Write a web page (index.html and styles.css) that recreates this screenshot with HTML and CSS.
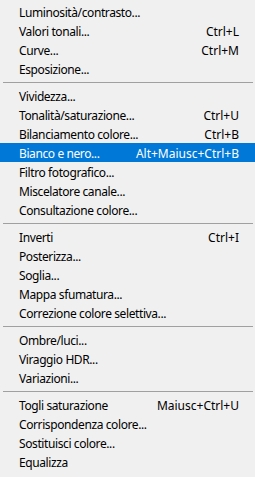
FILE: index.html
```html
<!DOCTYPE html>
<html>
<head>
<meta charset="utf-8">
<link rel="stylesheet" href="styles.css">
</head>
<body>
<div class="menu">
  <div class="item"><span>Luminosità/contrasto...</span></div>
  <div class="item"><span>Valori tonali...</span><span class="key">Ctrl+L</span></div>
  <div class="item"><span>Curve...</span><span class="key">Ctrl+M</span></div>
  <div class="item"><span>Esposizione...</span></div>
  <div class="sep"></div>
  <div class="item"><span>Vividezza...</span></div>
  <div class="item"><span>Tonalità/saturazione...</span><span class="key">Ctrl+U</span></div>
  <div class="item"><span>Bilanciamento colore...</span><span class="key">Ctrl+B</span></div>
  <div class="item active"><span>Bianco e nero...</span><span class="key">Alt+Maiusc+Ctrl+B</span></div>
  <div class="item"><span>Filtro fotografico...</span></div>
  <div class="item"><span>Miscelatore canale...</span></div>
  <div class="item"><span>Consultazione colore...</span></div>
  <div class="sep"></div>
  <div class="item"><span>Inverti</span><span class="key">Ctrl+I</span></div>
  <div class="item"><span>Posterizza...</span></div>
  <div class="item"><span>Soglia...</span></div>
  <div class="item"><span>Mappa sfumatura...</span></div>
  <div class="item"><span>Correzione colore selettiva...</span></div>
  <div class="sep"></div>
  <div class="item"><span>Ombre/luci...</span></div>
  <div class="item"><span>Viraggio HDR...</span></div>
  <div class="item"><span>Variazioni...</span></div>
  <div class="sep"></div>
  <div class="item"><span>Togli saturazione</span><span class="key">Maiusc+Ctrl+U</span></div>
  <div class="item"><span>Corrispondenza colore...</span></div>
  <div class="item"><span>Sostituisci colore...</span></div>
  <div class="item"><span>Equalizza</span></div>
</div>
</body>
</html>
```

FILE: styles.css
```css
html, body {
  margin: 0;
  padding: 0;
  background: #f0f0f0;
}
.menu {
  width: 255px;
  padding-top: 2px;
  font-family: "Noto Sans", "DejaVu Sans", sans-serif;
  font-size: 12px;
  letter-spacing: -0.4px;
  color: #000;
}
.item {
  display: flex;
  justify-content: space-between;
  align-items: center;
  height: 19px;
  line-height: 19px;
  padding: 1px 16px 0 19px;
  box-sizing: border-box;
  white-space: nowrap;
}
.key {
  letter-spacing: 0;
}
.item.active {
  background: #0078d7;
  color: #fff;
}
.sep {
  height: 8px;
  display: flex;
  align-items: center;
  padding: 0 2px 0 3px;
}
.sep::before {
  content: "";
  flex: 1;
  height: 1px;
  background: #a0a0a0;
}
```
